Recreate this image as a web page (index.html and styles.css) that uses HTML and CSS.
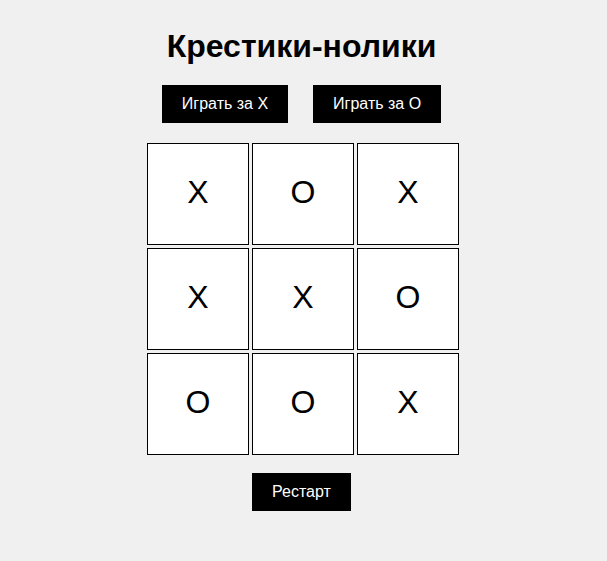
FILE: index.html
```html
<!DOCTYPE html>
<html lang="ru">
<head>
<meta charset="utf-8">
<title>Крестики-нолики</title>
<link rel="stylesheet" href="styles.css">
</head>
<body>
<div class="app">
  <h1 class="title">Крестики-нолики</h1>
  <div class="choices">
    <button class="btn">Играть за X</button>
    <button class="btn">Играть за O</button>
  </div>
  <div class="board">
    <div class="cell">X</div>
    <div class="cell">O</div>
    <div class="cell">X</div>
    <div class="cell">X</div>
    <div class="cell">X</div>
    <div class="cell">O</div>
    <div class="cell">O</div>
    <div class="cell">O</div>
    <div class="cell">X</div>
  </div>
  <button class="btn restart">Рестарт</button>
</div>
</body>
</html>
```

FILE: styles.css
```css
html, body {
  margin: 0;
  padding: 0;
  background: #f0f0f0;
  font-family: "Liberation Sans", Arial, sans-serif;
  color: #000;
}
.app {
  display: flex;
  flex-direction: column;
  align-items: center;
  padding-top: 28px;
  padding-right: 4px;
}
.title {
  margin: 0;
  font-size: 32px;
  line-height: 37px;
  font-weight: bold;
}
.choices {
  margin-top: 20px;
  display: flex;
  gap: 25px;
}
.btn {
  background: #000;
  color: #fff;
  border: none;
  font-family: "Liberation Sans", Arial, sans-serif;
  font-size: 16px;
  line-height: 18px;
  padding: 10px 20px;
  margin: 0;
  cursor: pointer;
}
.board {
  margin-top: 20px;
  margin-left: 3px;
  display: grid;
  grid-template-columns: repeat(3, 102px);
  grid-auto-rows: 102px;
  gap: 3px;
}
.cell {
  box-sizing: border-box;
  border: 1px solid #000;
  background: #fff;
  display: flex;
  align-items: center;
  justify-content: center;
  font-size: 32px;
  padding-bottom: 4px;
}
.restart {
  margin-top: 18px;
}
```
